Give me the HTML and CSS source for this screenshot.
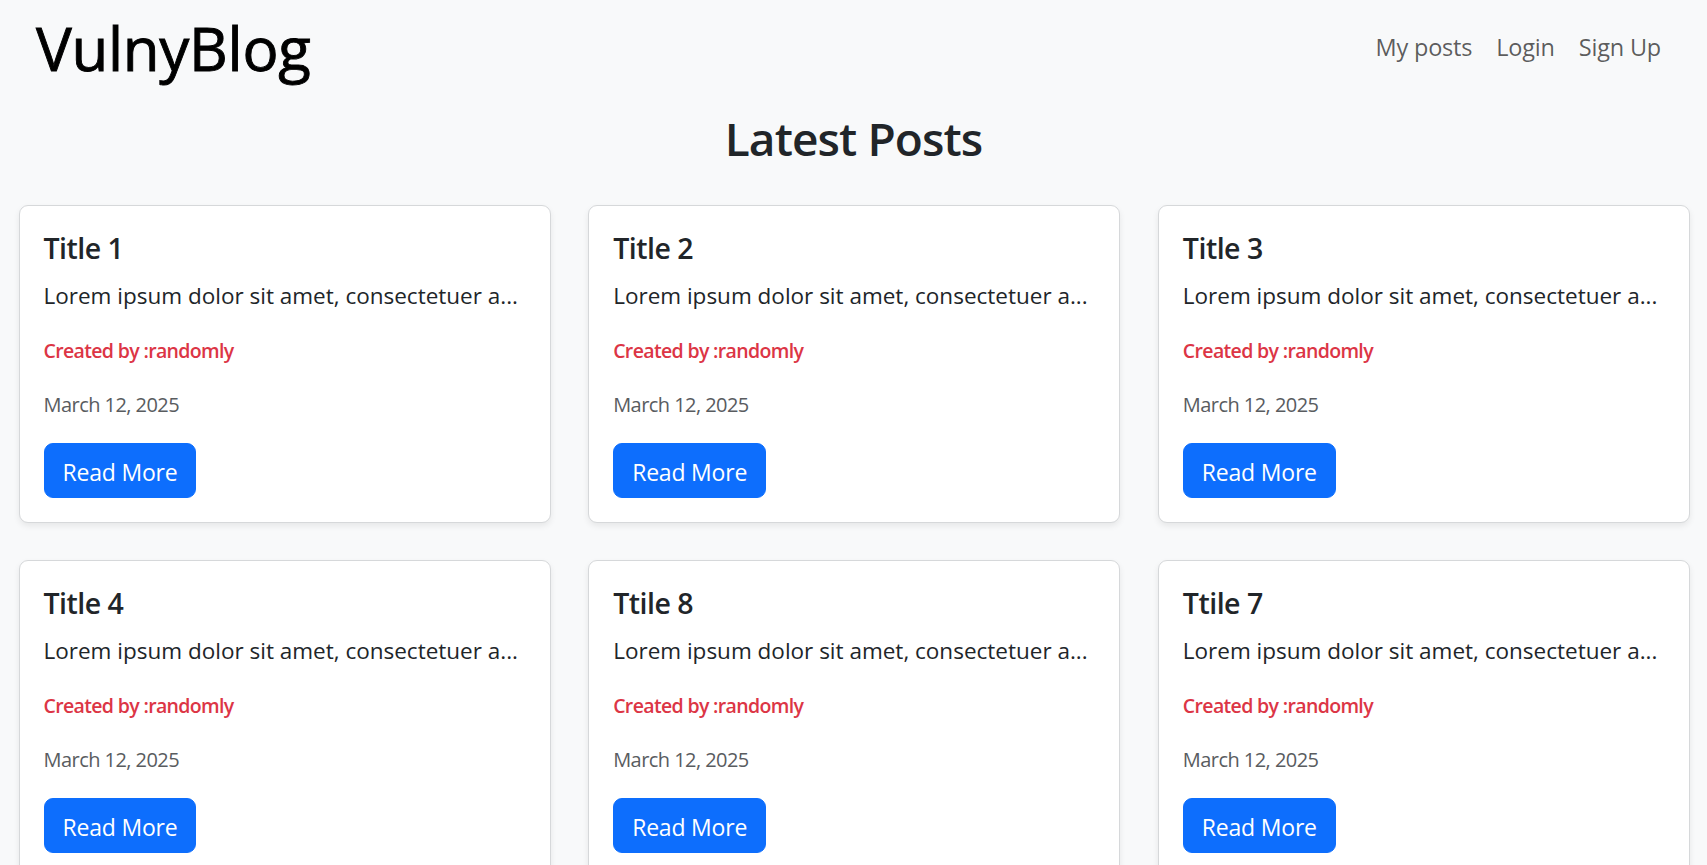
FILE: index.html
```html
<!DOCTYPE html>
<html lang="en">
<head>
<meta charset="utf-8">
<title>VulnyBlog</title>
<link rel="stylesheet" href="styles.css">
</head>
<body>
<header class="navbar">
  <h1 class="brand">VulnyBlog</h1>
  <nav class="nav">
    <a class="nav-link" href="#">My posts</a>
    <a class="nav-link" href="#">Login</a>
    <a class="nav-link" href="#">Sign Up</a>
  </nav>
</header>
<main>
  <h2 class="page-title">Latest Posts</h2>
  <div class="grid">
    <article class="card"><div class="card-body">
      <h5 class="card-title">Title 1</h5>
      <p class="card-text">Lorem ipsum dolor sit amet, consectetuer a...</p>
      <p class="author">Created by :randomly</p>
      <p class="date">March 12, 2025</p>
      <a class="btn" href="#">Read More</a>
    </div></article>
    <article class="card"><div class="card-body">
      <h5 class="card-title">Title 2</h5>
      <p class="card-text">Lorem ipsum dolor sit amet, consectetuer a...</p>
      <p class="author">Created by :randomly</p>
      <p class="date">March 12, 2025</p>
      <a class="btn" href="#">Read More</a>
    </div></article>
    <article class="card"><div class="card-body">
      <h5 class="card-title">Title 3</h5>
      <p class="card-text">Lorem ipsum dolor sit amet, consectetuer a...</p>
      <p class="author">Created by :randomly</p>
      <p class="date">March 12, 2025</p>
      <a class="btn" href="#">Read More</a>
    </div></article>
    <article class="card"><div class="card-body">
      <h5 class="card-title">Title 4</h5>
      <p class="card-text">Lorem ipsum dolor sit amet, consectetuer a...</p>
      <p class="author">Created by :randomly</p>
      <p class="date">March 12, 2025</p>
      <a class="btn" href="#">Read More</a>
    </div></article>
    <article class="card"><div class="card-body">
      <h5 class="card-title">Ttile 8</h5>
      <p class="card-text">Lorem ipsum dolor sit amet, consectetuer a...</p>
      <p class="author">Created by :randomly</p>
      <p class="date">March 12, 2025</p>
      <a class="btn" href="#">Read More</a>
    </div></article>
    <article class="card"><div class="card-body">
      <h5 class="card-title">Ttile 7</h5>
      <p class="card-text">Lorem ipsum dolor sit amet, consectetuer a...</p>
      <p class="author">Created by :randomly</p>
      <p class="date">March 12, 2025</p>
      <a class="btn" href="#">Read More</a>
    </div></article>
  </div>
</main>
</body>
</html>
```

FILE: styles.css
```css
* { box-sizing: border-box; }
html, body { margin: 0; padding: 0; }
body {
  background: #f8f9fa;
  color: #212529;
  font-family: "Open Sans", "Noto Sans", sans-serif;
  font-size: 24px;
  line-height: 1.5;
}
.navbar {
  display: flex;
  justify-content: space-between;
  align-items: center;
  padding: 12px 46px 0 36px;
}
.brand {
  margin: 0;
  font-size: 60px;
  line-height: 72px;
  font-weight: 400;
  letter-spacing: -0.3px;
  -webkit-text-stroke: 0.9px #000;
  color: #000;
}
.nav {
  display: flex;
  gap: 24px;
  padding-bottom: 3px;
}
.nav-link {
  color: rgba(0, 0, 0, 0.65);
  text-decoration: none;
  font-size: 23.5px;
  line-height: 36px;
  letter-spacing: -0.2px;
}
.page-title {
  margin: 26px 0 37.4px;
  text-align: center;
  font-size: 46px;
  line-height: 57.6px;
  font-weight: 600;
  letter-spacing: -0.9px;
  color: #212529;
}
.grid {
  display: grid;
  grid-template-columns: repeat(3, 1fr);
  gap: 37.5px;
  padding: 0 17px 0 18.5px;
}
.card {
  background: #fff;
  border: 1px solid #d6d8da;
  border-radius: 9px;
  box-shadow: 0 3px 6px rgba(0, 0, 0, 0.075);
}
.card-body {
  padding: 24px;
}
.card-title {
  margin: 0 0 12px;
  font-size: 28.5px;
  line-height: 36px;
  font-weight: 600;
  letter-spacing: -0.5px;
  color: #212529;
}
.card-text {
  margin: 0 0 21px;
  font-size: 22.5px;
  line-height: 36px;
  white-space: nowrap;
  overflow: hidden;
}
.author {
  margin: 0 0 22px;
  font-size: 19.5px;
  line-height: 32px;
  font-weight: 600;
  letter-spacing: -0.65px;
  color: #dc3545;
}
.date {
  margin: 0 0 22px;
  font-size: 20px;
  line-height: 32px;
  letter-spacing: -0.55px;
  color: #595c5f;
}
.btn {
  display: inline-block;
  background: #0d6efd;
  color: #fff;
  border: 1px solid #0d6efd;
  border-radius: 9px;
  padding: 10px 18px 7px;
  font-size: 23px;
  line-height: 36px;
  letter-spacing: -0.2px;
  text-decoration: none;
}
```
